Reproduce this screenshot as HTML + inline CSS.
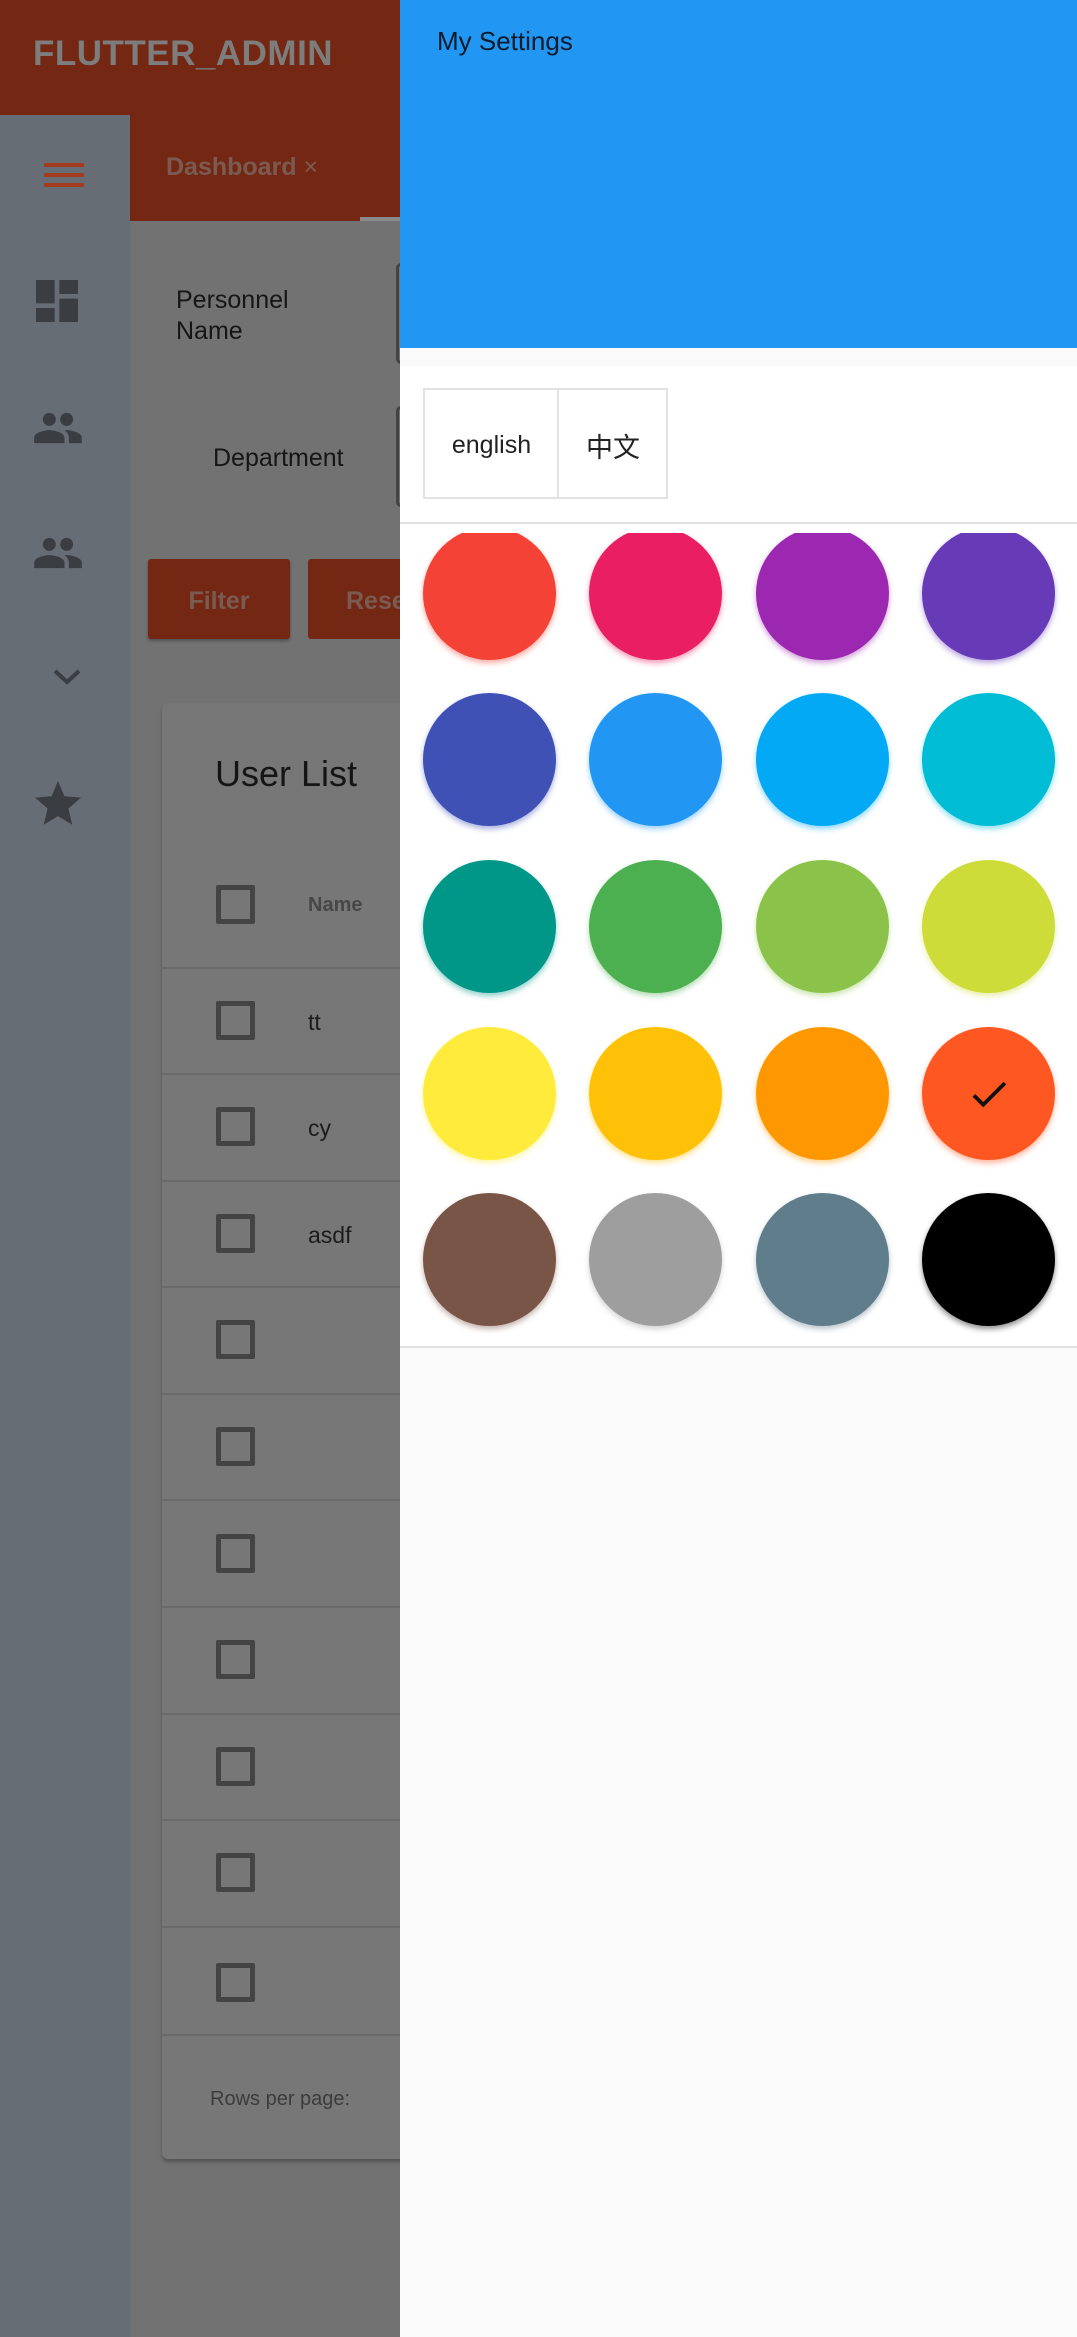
<!DOCTYPE html>
<html><head><meta charset="utf-8"><style>
*{margin:0;padding:0;box-sizing:border-box}
body{width:1077px;height:2337px;position:relative;overflow:hidden;background:#727272;font-family:"Liberation Sans","Noto Sans CJK SC",sans-serif}
.a{position:absolute}
.appbar{left:0;top:0;width:400px;height:115px;background:#742814}
.side{left:0;top:115px;width:130px;height:2222px;background:#666d75}
.tabs{left:130px;top:115px;width:270px;height:106px;background:#742814}
.ic{fill:#3a3e43}
.card{left:162px;top:703px;width:260px;height:1456px;background:#777;border-radius:6px;box-shadow:0 3px 3px rgba(0,0,0,.25)}
.cb{position:absolute;left:216px;width:39px;height:39px;border:5px solid #444;border-radius:2px}
.line{position:absolute;left:162px;width:240px;height:2px;background:#6a6a6a}
.row{position:absolute;left:308px;font-size:23px;color:#1c1c1c}
.drawer{left:400px;top:0;width:677px;height:2337px;background:#fafafa}
.c{position:absolute;width:133px;height:133px;border-radius:50%}
</style></head><body>
<div class="a appbar"></div>
<div class="a" style="left:33px;top:34px;font-size:35px;font-weight:bold;color:#7d7d7d;letter-spacing:0.5px">FLUTTER_ADMIN</div>
<div class="a side"></div>
<div class="a tabs"></div>
<div class="a" style="left:166px;top:153px;font-size:25px;font-weight:bold;color:#7a5b52">Dashboard <span style="font-weight:normal">×</span></div>
<div class="a" style="left:360px;top:217px;width:40px;height:4px;background:#8a8a8a"></div>
<div class="a" style="left:44px;top:163px;width:40px;height:4px;background:#a33b1c;box-shadow:0 10px 0 #a33b1c,0 20px 0 #a33b1c"></div>
<svg class="a" style="left:36px;top:280px" width="42" height="42" viewBox="3 3 18 18"><path class="ic" d="M3 13h8V3H3v10zm0 8h8v-6H3v6zm10 0h8V11h-8v10zm0-18v6h8V3h-8z"/></svg>
<svg class="a" style="left:32px;top:402px" width="52" height="52" viewBox="0 0 24 24"><path class="ic" d="M16 11c1.66 0 2.99-1.34 2.99-3S17.66 5 16 5c-1.66 0-3 1.34-3 3s1.34 3 3 3zm-8 0c1.66 0 2.99-1.34 2.99-3S9.66 5 8 5C6.34 5 5 6.34 5 8s1.34 3 3 3zm0 2c-2.33 0-7 1.17-7 3.5V19h14v-2.5c0-2.330-4.67-3.5-7-3.5zm8 0c-.29 0-.62.02-.97.05 1.16.84 1.970 1.97 1.97 3.45V19h6v-2.5c0-2.33-4.67-3.5-7-3.5z"/></svg>
<svg class="a" style="left:32px;top:527px" width="52" height="52" viewBox="0 0 24 24"><path class="ic" d="M16 11c1.66 0 2.99-1.34 2.99-3S17.66 5 16 5c-1.66 0-3 1.34-3 3s1.34 3 3 3zm-8 0c1.66 0 2.99-1.34 2.99-3S9.66 5 8 5C6.34 5 5 6.34 5 8s1.34 3 3 3zm0 2c-2.33 0-7 1.17-7 3.5V19h14v-2.5c0-2.33-4.67-3.5-7-3.5zm8 0c-.29 0-.62.02-.97.05 1.16.84 1.97 1.97 1.97 3.45V19h6v-2.5c0-2.33-4.67-3.5-7-3.5z"/></svg>
<svg class="a" style="left:52px;top:668px" width="30" height="20" viewBox="0 0 30 20"><path d="M3 3l12 11 12-11" fill="none" stroke="#3a3e43" stroke-width="4"/></svg>
<svg class="a" style="left:35px;top:781px" width="46" height="46" viewBox="2 2 20 20"><path class="ic" d="M12 17.27L18.18 21l-1.64-7.03L22 9.24l-7.19-.61L12 2 9.19 8.63 2 9.24l5.46 4.73L5.82 21z"/></svg>
<div class="a" style="left:176px;top:285px;font-size:25px;line-height:31px;color:#161616">Personnel<br>Name</div>
<div class="a" style="left:213px;top:444px;font-size:25px;color:#161616">Department</div>
<div class="a" style="left:396px;top:263px;width:10px;height:101px;border:3px solid #444;border-radius:6px"></div>
<div class="a" style="left:396px;top:406px;width:10px;height:101px;border:3px solid #444;border-radius:6px"></div>
<div class="a" style="left:148px;top:559px;width:142px;height:80px;background:#742814;border-radius:3px;box-shadow:0 2px 3px rgba(0,0,0,.3);color:#7a5b52;font-size:25px;font-weight:bold;text-align:center;line-height:84px">Filter</div>
<div class="a" style="left:308px;top:559px;width:120px;height:80px;background:#742814;border-radius:3px;color:#7a5b52;font-size:25px;font-weight:bold;line-height:84px;padding-left:38px">Reset</div>
<div class="a card"></div>
<div class="a" style="left:215px;top:753px;font-size:36px;color:#151515">User List</div>
<div class="cb" style="top:885px"></div>
<div class="row" style="top:894px;font-size:20px;font-weight:bold;color:#474747">Name</div>
<div class="line" style="top:967px"></div>
<div class="cb" style="top:1001px"></div><div class="row" style="top:1009px">tt</div>
<div class="line" style="top:1073px"></div>
<div class="cb" style="top:1107px"></div><div class="row" style="top:1115px">cy</div>
<div class="line" style="top:1180px"></div>
<div class="cb" style="top:1214px"></div><div class="row" style="top:1222px">asdf</div>
<div class="line" style="top:1286px"></div>
<div class="cb" style="top:1320px"></div>
<div class="line" style="top:1393px"></div>
<div class="cb" style="top:1427px"></div>
<div class="line" style="top:1499px"></div>
<div class="cb" style="top:1534px"></div>
<div class="line" style="top:1606px"></div>
<div class="cb" style="top:1640px"></div>
<div class="line" style="top:1713px"></div>
<div class="cb" style="top:1747px"></div>
<div class="line" style="top:1819px"></div>
<div class="cb" style="top:1853px"></div>
<div class="line" style="top:1926px"></div>
<div class="cb" style="top:1963px"></div>
<div class="line" style="top:2034px"></div>
<div class="a" style="left:210px;top:2088px;font-size:20px;color:#3c3c3c">Rows per page:</div>
<div class="a drawer">
 <div class="a" style="left:0;top:0;width:677px;height:348px;background:#2196f3"></div>
 <div class="a" style="left:37px;top:26px;font-size:26px;font-weight:500;color:#0d1b2a">My Settings</div>
 <div class="a" style="left:0;top:366px;width:677px;height:981px;background:#fff"></div>
 <div class="a" style="left:23px;top:388px;width:245px;height:111px;border:2px solid #e2e2e2"></div>
 <div class="a" style="left:157px;top:388px;width:2px;height:111px;background:#e2e2e2"></div>
 <div class="a" style="left:25px;top:431px;width:133px;text-align:center;font-size:25px;color:#222">english</div>
 <div class="a" style="left:159px;top:426px;width:108px;text-align:center;font-size:27px;color:#222">中文</div>
 <div class="a" style="left:0;top:522px;width:677px;height:2px;background:#e0e0e0"></div>
 <div class="a" style="left:0;top:533px;width:677px;height:812px;overflow:hidden">
  <div class="c" style="left:23px;top:-6px;background:#f44336;box-shadow:0 3px 6px rgba(244,67,54,.45)"></div>
  <div class="c" style="left:189px;top:-6px;background:#e91e63;box-shadow:0 3px 6px rgba(233,30,99,.45)"></div>
  <div class="c" style="left:356px;top:-6px;background:#9c27b0;box-shadow:0 3px 6px rgba(156,39,176,.45)"></div>
  <div class="c" style="left:522px;top:-6px;background:#673ab7;box-shadow:0 3px 6px rgba(103,58,183,.45)"></div>
  <div class="c" style="left:23px;top:160px;background:#3f51b5;box-shadow:0 3px 6px rgba(63,81,181,.45)"></div>
  <div class="c" style="left:189px;top:160px;background:#2196f3;box-shadow:0 3px 6px rgba(33,150,243,.45)"></div>
  <div class="c" style="left:356px;top:160px;background:#03a9f4;box-shadow:0 3px 6px rgba(3,169,244,.45)"></div>
  <div class="c" style="left:522px;top:160px;background:#00bcd4;box-shadow:0 3px 6px rgba(0,188,212,.45)"></div>
  <div class="c" style="left:23px;top:327px;background:#009688;box-shadow:0 3px 6px rgba(0,150,136,.45)"></div>
  <div class="c" style="left:189px;top:327px;background:#4caf50;box-shadow:0 3px 6px rgba(76,175,80,.45)"></div>
  <div class="c" style="left:356px;top:327px;background:#8bc34a;box-shadow:0 3px 6px rgba(139,195,74,.45)"></div>
  <div class="c" style="left:522px;top:327px;background:#cddc39;box-shadow:0 3px 6px rgba(205,220,57,.45)"></div>
  <div class="c" style="left:23px;top:494px;background:#ffeb3b;box-shadow:0 3px 6px rgba(255,235,59,.45)"></div>
  <div class="c" style="left:189px;top:494px;background:#ffc107;box-shadow:0 3px 6px rgba(255,193,7,.45)"></div>
  <div class="c" style="left:356px;top:494px;background:#ff9800;box-shadow:0 3px 6px rgba(255,152,0,.45)"></div>
  <div class="c" style="left:522px;top:494px;background:#ff5722;box-shadow:0 3px 6px rgba(255,87,34,.45)">
   <svg style="position:absolute;left:44px;top:44px" width="46" height="46" viewBox="0 0 24 24"><path d="M9 16.17L4.83 12l-1.42 1.41L9 19 21 7l-1.41-1.41z" fill="#111"/></svg>
  </div>
  <div class="c" style="left:23px;top:660px;background:#795548;box-shadow:0 3px 6px rgba(121,85,72,.45)"></div>
  <div class="c" style="left:189px;top:660px;background:#9e9e9e;box-shadow:0 3px 6px rgba(158,158,158,.45)"></div>
  <div class="c" style="left:356px;top:660px;background:#607d8b;box-shadow:0 3px 6px rgba(96,125,139,.45)"></div>
  <div class="c" style="left:522px;top:660px;background:#000;box-shadow:0 3px 6px rgba(0,0,0,.45)"></div>
 </div>
 <div class="a" style="left:0;top:1346px;width:677px;height:2px;background:#e0e0e0"></div>
</div>
</body></html>
